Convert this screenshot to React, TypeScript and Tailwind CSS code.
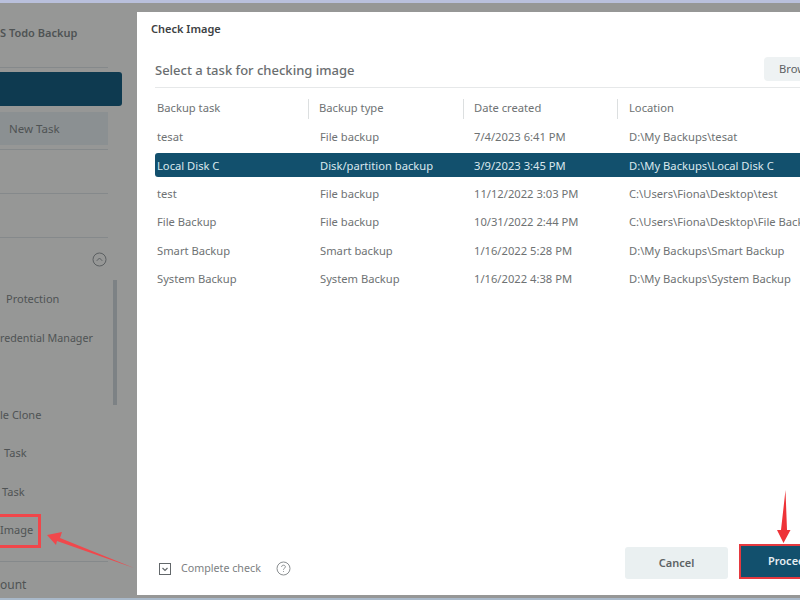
const rows = [
  ["tesat", "File backup", "7/4/2023 6:41 PM", "D:\\My Backups\\tesat"],
  ["Local Disk C", "Disk/partition backup", "3/9/2023 3:45 PM", "D:\\My Backups\\Local Disk C"],
  ["test", "File backup", "11/12/2022 3:03 PM", "C:\\Users\\Fiona\\Desktop\\test"],
  ["File Backup", "File backup", "10/31/2022 2:44 PM", "C:\\Users\\Fiona\\Desktop\\File Backup"],
  ["Smart Backup", "Smart backup", "1/16/2022 5:28 PM", "D:\\My Backups\\Smart Backup"],
  ["System Backup", "System Backup", "1/16/2022 4:38 PM", "D:\\My Backups\\System Backup"],
];

const headers = ["Backup task", "Backup type", "Date created", "Location"];

const sideItems = [
  { label: "Protection", pad: "pl-[6px]" },
  { label: "redential Manager", pad: "text-[10.7px]" },
  { label: "", pad: "" },
  { label: "le Clone", pad: "pl-0" },
  { label: "Task", pad: "pl-[4px]" },
  { label: "Task", pad: "pl-[2px]" },
  { label: "Image", pad: "pl-0" },
];

function Sidebar() {
  return (
    <aside className="relative w-[137px] shrink-0 flex flex-col text-[11px] text-[#4f5354] [&>*]:shrink-0">
      <div className="h-[65px] w-[108px] pb-[3px] flex items-center border-b border-[#85898b] font-semibold whitespace-nowrap">
        S Todo Backup
      </div>
      <div className="mt-[4px] h-[34px] w-[122px] rounded-r-[3px] bg-[#0e3a50]"></div>
      <div className="mt-[6px] h-[33px] w-[108px] pl-[9px] flex items-center bg-[#8b9092] text-[11.5px]">New Task</div>
      <div className="mt-[4px] h-[1px] w-[108px] bg-[#85898b]"></div>
      <div className="mt-[43px] h-[1px] w-[108px] bg-[#85898b]"></div>
      <div className="mt-[43px] h-[1px] w-[108px] bg-[#85898b]"></div>
      <div className="h-[42px] w-[108px] flex items-center justify-end pr-[1px]">
        <svg className="w-[15px] h-[15px]" viewBox="0 0 15 15" fill="none" stroke="#5c6062" strokeWidth="1">
          <circle cx="7.5" cy="7.5" r="6.5" />
          <path d="M4.8 8.8 L7.5 6 L10.2 8.8" />
        </svg>
      </div>
      {sideItems.map((item, i) => (
        <div key={i} className={`h-[38.5px] flex items-center whitespace-nowrap ${item.pad}`}>
          {item.label}
        </div>
      ))}
      <div className="mt-[11px] h-[1px] w-[108px] bg-[#85898b]"></div>
      <div className="h-[47px] flex items-center text-[12px] whitespace-nowrap">ount</div>

      <div className="absolute left-[113px] top-[277px] w-[4px] h-[125px] bg-[#7d8285]"></div>
      <div className="absolute left-[-4px] top-[511px] w-[45px] h-[34px] border-[3px] border-[#f0464a]"></div>
    </aside>
  );
}

function Dialog() {
  return (
    <section className="flex-1 min-w-0 mt-[9px] h-[583px] bg-white flex flex-col overflow-hidden text-[11.2px] text-[#6e7273]">
      <div className="pl-[14px] h-[34px] flex items-center text-[11px] text-[#3d4143] font-semibold">Check Image</div>
      <div className="ml-[18px] mt-[11px] h-[30px] flex items-start justify-between border-b border-[#e6e8e9] box-content">
        <div className="pt-[4px] text-[13px] font-medium text-[#6a6e70]">Select a task for checking image</div>
        <button className="shrink-0 w-[66px] h-[24px] -mr-[30px] rounded-l-[4px] bg-[#eef2f3] pl-[15px] text-left text-[#5d6163] whitespace-nowrap overflow-hidden">
          Browse
        </button>
      </div>
      <div className="ml-[18px] h-[41px] flex items-center">
        {headers.map((h, i) => (
          <div
            key={h}
            className={`h-[20px] flex items-center shrink-0 ${i === 0 ? "w-[154px] pl-[2px] border-r border-[#dcdfe0]" : i === 1 ? "w-[155px] pl-[10px] border-r border-[#dcdfe0]" : i === 2 ? "w-[154px] pl-[10px] border-r border-[#dcdfe0]" : "pl-[11px]"}`}
          >
            {h}
          </div>
        ))}
      </div>
      <div className="ml-[18px] flex flex-col -mt-[7px]">
        {rows.map((r) => {
          const active = r[0] === "Local Disk C";
          return (
            <div
              key={r[0]}
              className={`h-[28.4px] flex items-center whitespace-nowrap ${active ? "text-[#dbe8ee]" : ""}`}
            >
              <div className={`h-[24px] w-full pt-[3px] flex items-center rounded-l-[3px] ${active ? "bg-[#12506d]" : ""}`}>
                <div className="w-[165px] pl-[2px] shrink-0">{r[0]}</div>
                <div className="w-[154px] shrink-0">{r[1]}</div>
                <div className="w-[155px] shrink-0">{r[2]}</div>
                <div className="shrink-0">{r[3]}</div>
              </div>
            </div>
          );
        })}
      </div>
      <div className="mt-auto h-[51px] flex items-start">
        <div className="ml-[22px] mt-[18px] h-[13px] flex items-center">
          <svg className="w-[12px] h-[12px]" viewBox="0 0 12 12" fill="none" stroke="#62676a" strokeWidth="1">
            <rect x="0.5" y="0.5" width="11" height="11" />
            <path d="M3.5 5 L6 7.5 L8.5 5" strokeWidth="1.2" />
          </svg>
          <span className="ml-[10px] text-[10.7px] text-[#7c8082] whitespace-nowrap">Complete check</span>
          <svg className="ml-[15px] w-[15px] h-[15px]" viewBox="0 0 15 15" fill="none" stroke="#8a8e90" strokeWidth="1">
            <circle cx="7.5" cy="7.5" r="6.5" />
            <path d="M5.6 6 C5.6 4.8 6.4 4.2 7.5 4.2 C8.6 4.2 9.4 4.9 9.4 5.9 C9.4 7.2 7.5 7.2 7.5 8.7" />
            <path d="M7.5 10.2 L7.5 11" />
          </svg>
        </div>
        <div className="ml-auto flex items-start shrink-0 -mr-[19px] text-[11px]">
          <button className="w-[103px] h-[32px] mt-[3px] rounded-[3px] bg-[#eaf0f1] font-semibold text-[#5d6365]">Cancel</button>
          <button className="ml-[11px] w-[80px] h-[35px] border-[2px] border-[#e5393f] bg-[#12506d] pl-[27px] text-left font-semibold text-[#e6eef2] whitespace-nowrap overflow-hidden">
            Proceed
          </button>
        </div>
      </div>
    </section>
  );
}

export default function App() {
  return (
    <div className="relative w-[800px] h-[600px] overflow-hidden flex flex-col bg-[#969796] font-['Noto_Sans','Open_Sans',sans-serif]">
      <div className="h-[3px] shrink-0 bg-[#b9c0dc]"></div>
      <div className="flex-1 flex min-h-0">
        <Sidebar />
        <Dialog />
      </div>
      <div className="h-[2px] shrink-0 bg-[#a9b9ca]"></div>
      <svg className="absolute left-0 top-0 w-[800px] h-[600px] pointer-events-none" viewBox="0 0 800 600">
        <polygon points="47,535 62,532 60,538 134,568 57,541 56,545" fill="#f0484c" />
        <polygon points="785.5,490 787,530 790.5,530 783.5,543 777,530 781,530" fill="#ee3338" />
      </svg>
    </div>
  );
}
